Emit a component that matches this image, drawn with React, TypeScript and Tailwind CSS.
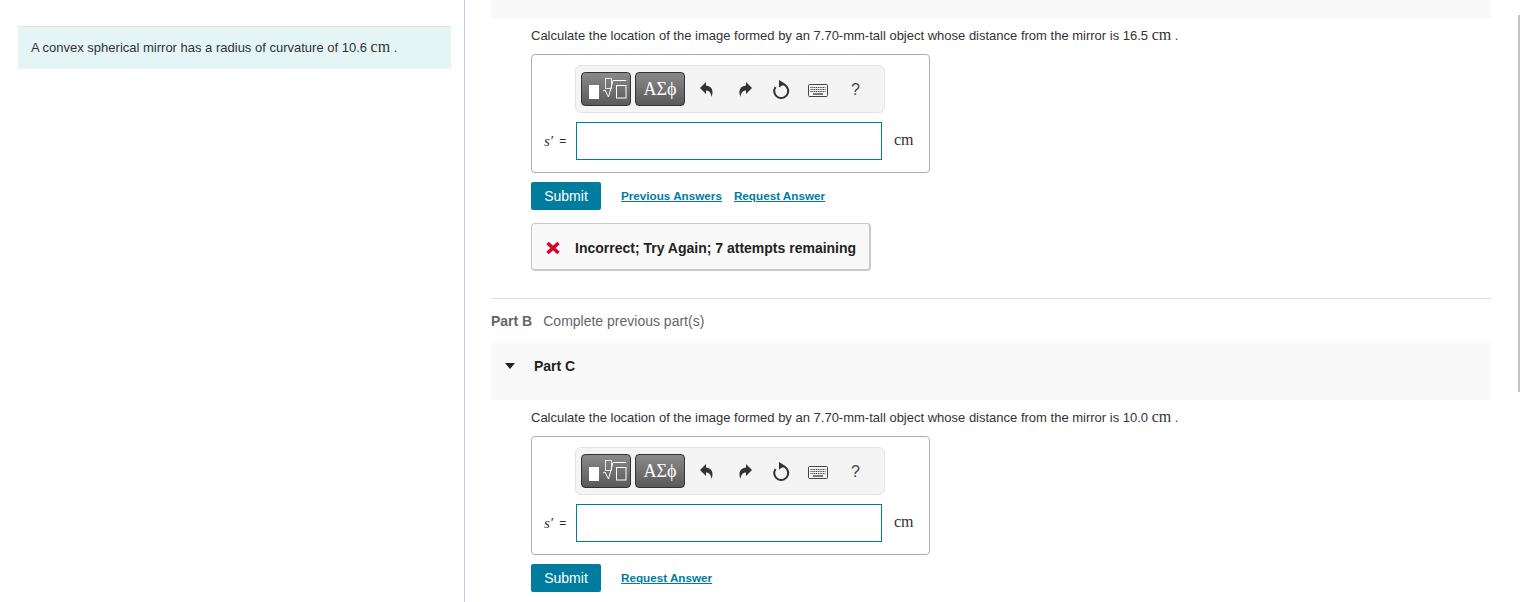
const Cm = () => <span className="font-['Liberation_Serif',serif] text-[16px] leading-none">cm</span>;

const ToolIcon = ({ children }: { children: React.ReactNode }) => (
  <svg viewBox="0 0 24 24" className="w-[24px] h-[24px] text-[#333]" fill="currentColor">
    {children}
  </svg>
);

const Toolbar = () => (
  <div className="flex items-center w-[310px] h-[48px] ml-[43px] pl-[5px] bg-[#f4f4f4] border border-[#e3e3e3] rounded-[6px]">
    <div className="w-[50px] h-[34px] rounded-[4px] border border-[#333] bg-gradient-to-b from-[#8a8a8a] to-[#5a5a5a]">
      <svg viewBox="0 0 48 32" className="w-[48px] h-[32px] text-white" fill="none" stroke="currentColor">
        <rect x="7" y="12" width="10" height="14" fill="currentColor" stroke="none" />
        <rect x="23.5" y="5.5" width="6" height="10" strokeWidth="0.8" />
        <path d="M21 18 L23 17 L26.5 24 L31 7.5 H44" strokeWidth="1" />
        <rect x="34.5" y="12.5" width="9.5" height="12.5" strokeWidth="1" />
      </svg>
    </div>
    <div className="flex items-center justify-center w-[50px] h-[34px] ml-[4px] rounded-[4px] border border-[#333] bg-gradient-to-b from-[#8a8a8a] to-[#5a5a5a] text-white font-['Liberation_Serif',serif] text-[18px]">
      ΑΣϕ
    </div>
    <div className="flex items-center justify-center w-[24px] ml-[10px]">
      <ToolIcon>
        <path d="M11 5 L5 11 L11 17 V13.5 C14 13.5 16 15.5 16.5 20 C19 14 17 9 11 8.5 Z" />
      </ToolIcon>
    </div>
    <div className="flex items-center justify-center w-[24px] ml-[14px]">
      <ToolIcon>
        <path d="M13 5 L19 11 L13 17 V13.5 C10 13.5 8 15.5 7.5 20 C5 14 7 9 13 8.5 Z" />
      </ToolIcon>
    </div>
    <div className="flex items-center justify-center w-[24px] ml-[13px]">
      <svg viewBox="0 0 24 24" className="w-[24px] h-[24px] text-[#333]" fill="none" stroke="currentColor" strokeWidth="2">
        <path d="M12 7.1 A7 7 0 1 1 5.5 10" />
        <path d="M9 3 L15 6.8 L9 10.5 Z" fill="currentColor" stroke="none" />
      </svg>
    </div>
    <svg viewBox="0 0 20 13" className="w-[20px] h-[13px] ml-[14px] mt-[3px] text-[#444]" fill="none" stroke="currentColor">
      <rect x="0.5" y="0.5" width="19" height="12" rx="1" fill="#f4f4f4" />
      <path d="M2.5 3.5 H17.5 M2.5 5.5 H17.5 M2.5 7.5 H17.5" strokeDasharray="1.2 0.6" />
      <path d="M5 10 H15" strokeWidth="1.4" />
    </svg>
    <span className="ml-[23px] mt-[1px] text-[16px] text-[#444]">?</span>
  </div>
);

const AnswerBox = () => (
  <div className="w-[399px] h-[119px] border border-[#adadad] rounded-[4px] pt-[10px]">
    <Toolbar />
    <div className="flex items-center h-[38px] mt-[9px]">
      <span className="flex items-center w-[44px] pl-[12px] text-[#333] text-[12px] whitespace-nowrap">
        <i className="font-['Liberation_Serif',serif] text-[15px]">s′</i>
        <span className="ml-[6px]">=</span>
      </span>
      <div className="w-[306px] h-[38px] border border-[#007c9e] bg-white" />
      <span className="ml-[12px] mb-[2px] text-[#333]">
        <Cm />
      </span>
    </div>
  </div>
);

const SubmitRow = ({ links }: { links: string[] }) => (
  <div className="flex items-center h-[28px] mt-[9px]">
    <button className="w-[70px] h-[28px] bg-[#007c9e] rounded-[2px] text-white text-[14px]">Submit</button>
    <div className="flex gap-[12px] ml-[20px]">
      {links.map((l) => (
        <a key={l} className="text-[#007c9e] text-[11.7px] font-bold underline">
          {l}
        </a>
      ))}
    </div>
  </div>
);

export default function App() {
  return (
    <div className="relative flex h-[602px] overflow-hidden bg-white font-['Liberation_Sans',Arial,sans-serif] text-[#333]">
      <div className="w-[465px] shrink-0 border-r border-[#b9cfe2] pt-[26px] pl-[18px]">
        <div className="w-[433px] h-[43px] flex items-center pl-[13px] bg-[#e5f5f6] border-t border-[#d9e4e6] text-[13px]">
          <span>
            A convex spherical mirror has a radius of curvature of 10.6 <Cm /> .
          </span>
        </div>
      </div>

      <div className="w-[1000px] ml-[26px] shrink-0">
        <div className="h-[18px] bg-[#f9f9f9]" />
        <div className="pl-[40px]">
          <p className="h-[36px] pt-[9px] text-[13px] leading-[16px]">
            Calculate the location of the image formed by an 7.70-mm-tall object whose distance from the mirror is 16.5 <Cm /> .
          </p>
          <AnswerBox />
          <SubmitRow links={["Previous Answers", "Request Answer"]} />
          <div className="flex items-center w-[340px] h-[48px] mt-[13px] pl-[14px] pt-[3px] bg-[#f9f9f9] border border-[#c9c9c9] border-b-2 border-r-2 rounded-[4px]">
            <svg viewBox="0 0 14 14" className="w-[14px] h-[14px] text-[#d9002b]" fill="none" stroke="currentColor" strokeWidth="3.6">
              <path d="M1.5 2 L12.5 12 M12.5 2 L1.5 12" />
            </svg>
            <span className="ml-[15px] text-[14px] font-bold text-[#222]">Incorrect; Try Again; 7 attempts remaining</span>
          </div>
        </div>

        <div className="mt-[27px] border-t border-[#dedede] h-[45px] flex items-center text-[14px] text-[#666]">
          <b>Part B</b>
          <span className="ml-[11px]">Complete previous part(s)</span>
        </div>

        <div className="flex items-center h-[57px] pb-[11px] bg-[#f9f9f9]">
          <div className="ml-[14px] w-0 h-0 border-x-[5px] border-x-transparent border-t-[6px] border-t-[#222]" />
          <b className="ml-[19px] text-[14px] text-[#222]">Part C</b>
        </div>

        <div className="pl-[40px]">
          <p className="h-[36px] pt-[9px] text-[13px] leading-[16px]">
            Calculate the location of the image formed by an 7.70-mm-tall object whose distance from the mirror is 10.0 <Cm /> .
          </p>
          <AnswerBox />
          <SubmitRow links={["Request Answer"]} />
        </div>
      </div>

      <div className="absolute right-0 top-[15px] w-[2px] h-[377px] bg-[#c4c4c4]" />
    </div>
  );
}
